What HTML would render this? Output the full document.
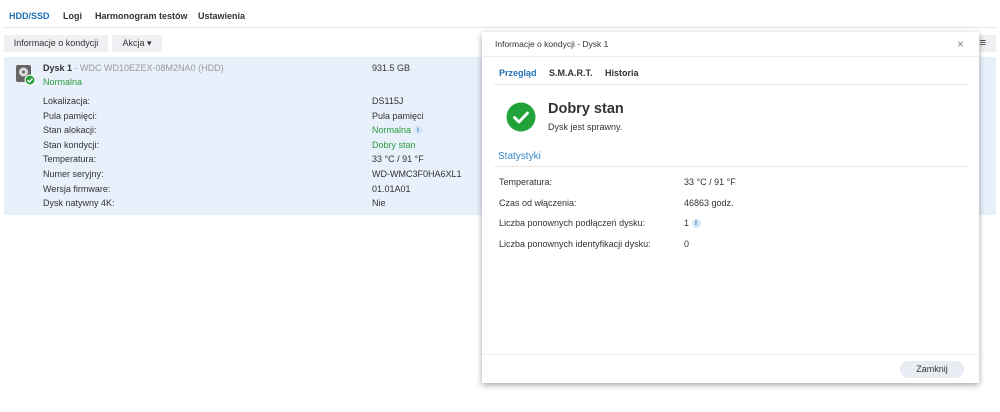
<!DOCTYPE html><html><head><style>
body{margin:0;width:1000px;height:412px;background:#fff;font-family:"Liberation Sans",sans-serif;font-size:9px;color:#333;position:relative;overflow:hidden}
.a{position:absolute;white-space:nowrap}
b{font-weight:bold}
.g{color:#2a9d3c}
.i{display:inline-block;width:9px;height:9px;border-radius:50%;background:#d5e6f7;color:#3a7fc4;font-size:7px;text-align:center;line-height:9px;font-weight:bold;vertical-align:middle}
</style></head><body>
<div class="a" style="left:9px;top:11px;font-weight:bold;color:#1f6fb5">HDD/SSD</div>
<div class="a" style="left:63px;top:11px;font-weight:bold">Logi</div>
<div class="a" style="left:95px;top:11px;font-weight:bold">Harmonogram testów</div>
<div class="a" style="left:198px;top:11px;font-weight:bold">Ustawienia</div>
<div class="a" style="left:4px;top:27px;width:992px;height:1px;background:#e3e6ea"></div>
<div class="a" style="left:4px;top:35px;width:104px;height:17px;background:#eef0f3;line-height:17px;text-align:center">Informacje o kondycji</div>
<div class="a" style="left:112px;top:35px;width:50px;height:17px;background:#eef0f3;line-height:17px;text-align:center">Akcja ▾</div>
<div class="a" style="left:970px;top:35px;width:26px;height:17px;background:#eef0f3;line-height:17px;text-align:center;font-size:11px">≡</div>
<div class="a" style="left:4px;top:57px;width:992px;height:158px;background:#e8f0fb"></div>
<svg class="a" style="left:15px;top:64px" width="22" height="22"><rect x="1" y="1" width="15" height="17" rx="2" fill="#666"/><circle cx="8.5" cy="8" r="4.5" fill="#ddd"/><circle cx="8.5" cy="8" r="1.5" fill="#666"/><circle cx="15" cy="16" r="5" fill="#2a9d3c" stroke="#fff" stroke-width="1"/><path d="M12.5 16l2 2 3-3.5" stroke="#fff" stroke-width="1.4" fill="none"/></svg>
<div class="a" style="left:43px;top:63px"><b>Dysk 1</b> <span style="color:#999">- WDC WD10EZEX-08M2NA0 (HDD)</span></div>
<div class="a g" style="left:43px;top:77px">Normalna</div>
<div class="a" style="left:372px;top:63px">931.5 GB</div>
<div class="a" style="left:43px;top:94px;line-height:14.6px">Lokalizacja:<br>Pula pamięci:<br>Stan alokacji:<br>Stan kondycji:<br>Temperatura:<br>Numer seryjny:<br>Wersja firmware:<br>Dysk natywny 4K:</div>
<div class="a" style="left:372px;top:94px;line-height:14.6px">DS115J<br>Pula pamięci<br><span class="g">Normalna</span> <span class="i">i</span><br><span class="g">Dobry stan</span><br>33 °C / 91 °F<br>WD-WMC3F0HA6XL1<br>01.01A01<br>Nie</div>
<div class="a" style="left:482px;top:32px;width:497px;height:351px;background:#fff;box-shadow:0 2px 6px rgba(0,0,0,.35)"></div>
<div class="a" style="left:495px;top:39px;font-size:8.5px">Informacje o kondycji - Dysk 1</div>
<div class="a" style="left:957px;top:37px;font-size:12px;color:#888">×</div>
<div class="a" style="left:482px;top:56px;width:497px;height:1px;background:#eceef1"></div>
<div class="a" style="left:499px;top:68px;font-weight:bold;color:#1f6fb5">Przegląd</div>
<div class="a" style="left:549px;top:68px;font-weight:bold">S.M.A.R.T.</div>
<div class="a" style="left:605px;top:68px;font-weight:bold">Historia</div>
<div class="a" style="left:494px;top:84px;width:473px;height:1px;background:#e3e6ea"></div>
<svg class="a" style="left:506px;top:102px" width="30" height="30"><circle cx="15" cy="15" r="14.5" fill="#22a33a"/><path d="M8.5 15.5l4.5 4.5 8.5-9" stroke="#fff" stroke-width="2.8" fill="none" stroke-linecap="round" stroke-linejoin="round"/></svg>
<div class="a" style="left:548px;top:101px;font-size:14.5px;font-weight:bold">Dobry stan</div>
<div class="a" style="left:548px;top:122px">Dysk jest sprawny.</div>
<div class="a" style="left:498px;top:151px;font-size:10px;color:#3a86c8">Statystyki</div>
<div class="a" style="left:494px;top:166px;width:473px;border-top:1px dotted #e7c9c4"></div>
<div class="a" style="left:499px;top:172px;line-height:20.5px">Temperatura:<br>Czas od włączenia:<br>Liczba ponownych podłączeń dysku:<br>Liczba ponownych identyfikacji dysku:</div>
<div class="a" style="left:684px;top:172px;line-height:20.5px">33 °C / 91 °F<br>46863 godz.<br>1 <span class="i">i</span><br>0</div>
<div class="a" style="left:482px;top:354px;width:497px;height:1px;background:#eceef1"></div>
<div class="a" style="left:900px;top:361px;width:64px;height:17px;border-radius:9px;background:#e8ecf3;line-height:17px;text-align:center">Zamknij</div>
</body></html>
